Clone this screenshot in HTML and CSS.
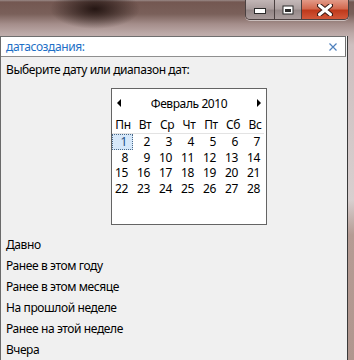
FILE: index.html
```html
<!DOCTYPE html>
<html lang="ru">
<head>
    <meta charset="UTF-8">
    <title>датасоздания</title>
    <link rel="stylesheet" href="styles.css">
</head>
<body>
    <div class="titlebar">
        <div class="caption-buttons">
            <span class="caption-btn btn-min">
                <svg width="12" height="6" viewBox="0 0 12 6"><rect x="0.5" y="0.5" width="11" height="5" fill="#fff" stroke="#2a2a2a"/></svg>
            </span>
            <span class="caption-btn btn-max">
                <svg width="12" height="10" viewBox="0 0 12 10"><rect x="0.5" y="0.5" width="11" height="9" fill="#2a2a2a"/><rect x="1.5" y="1.5" width="9" height="7" fill="#fff"/><rect x="3" y="4" width="6" height="3" fill="#2a2a2a"/></svg>
            </span>
            <span class="caption-btn btn-close">
                <svg width="16" height="12" viewBox="0 0 16 12"><path d="M2 1 L14 11 M14 1 L2 11" stroke="#3a1a14" stroke-width="5" stroke-linecap="round"/><path d="M2.5 1.5 L13.5 10.5 M13.5 1.5 L2.5 10.5" stroke="#fff" stroke-width="3" stroke-linecap="round"/></svg>
            </span>
        </div>
    </div>

    <div class="panel">
        <div class="panel-header">
            <span class="panel-title">датасоздания:</span>
            <svg class="panel-close" width="8" height="8" viewBox="0 0 8 8"><path d="M0.5 0.5 L7.5 7.5 M7.5 0.5 L0.5 7.5" stroke="#4f80bd" stroke-width="1.2"/></svg>
        </div>

        <div class="prompt">Выберите дату или диапазон дат:</div>

        <div class="calendar">
            <div class="cal-title">
                <span class="cal-arrow arrow-left"></span>
                <span>Февраль 2010</span>
                <span class="cal-arrow arrow-right"></span>
            </div>
            <div class="cal-weekdays">
                <span>Пн</span><span>Вт</span><span>Ср</span><span>Чт</span><span>Пт</span><span>Сб</span><span>Вс</span>
            </div>
            <div class="cal-days">
                <span class="day selected">1</span><span class="day">2</span><span class="day">3</span><span class="day">4</span><span class="day">5</span><span class="day">6</span><span class="day">7</span>
                <span class="day">8</span><span class="day">9</span><span class="day">10</span><span class="day">11</span><span class="day">12</span><span class="day">13</span><span class="day">14</span>
                <span class="day">15</span><span class="day">16</span><span class="day">17</span><span class="day">18</span><span class="day">19</span><span class="day">20</span><span class="day">21</span>
                <span class="day">22</span><span class="day">23</span><span class="day">24</span><span class="day">25</span><span class="day">26</span><span class="day">27</span><span class="day">28</span>
            </div>
        </div>

        <ul class="ranges">
            <li>Давно</li>
            <li>Ранее в этом году</li>
            <li>Ранее в этом месяце</li>
            <li>На прошлой неделе</li>
            <li>Ранее на этой неделе</li>
            <li>Вчера</li>
        </ul>
    </div>
</body>
</html>
```

FILE: styles.css
```css
:root {
    --color-panel: #F0F0F0;
    --color-white: #FFFFFF;
    --color-text: #000000;
    --color-link: #1E6FC6;
    --color-border: #646464;
}

body {
    margin: 0;
    width: 354px;
    height: 360px;
    overflow: hidden;
    font-family: "Segoe UI", "Noto Sans", sans-serif;
    font-size: 12px;
    letter-spacing: -0.4px;
    color: var(--color-text);
    background:
        radial-gradient(ellipse 45px 20px at 95px 9px, rgba(32, 18, 15, 0.95), rgba(32, 18, 15, 0)),
        linear-gradient(to bottom, #9a8a88 0, #735751 2px, #7a605a 14px, #a48d8a 24px, #bba8a6 33px, #cdbfbf 45px, #d8cfcf 200px, #b59c94 235px, #b0968e 360px);
}

/* Кнопки окна */
.titlebar {
    height: 36px;
    display: flex;
    justify-content: flex-end;
    align-items: flex-start;
    padding-right: 5px;
}

.caption-buttons {
    display: flex;
    height: 19px;
    border: 1px solid #4a4040;
    border-top: none;
    border-radius: 0 0 5px 5px;
    overflow: hidden;
    box-shadow: 0 1px 0 rgba(255, 255, 255, 0.5);
}

.caption-btn {
    display: flex;
    justify-content: center;
    align-items: center;
    height: 19px;
    box-sizing: border-box;
}

.btn-min {
    width: 29px;
    align-items: flex-end;
    padding-bottom: 5px;
    background: linear-gradient(to bottom, #c2b6b6 0, #aa9d9d 45%, #928585 55%, #a89b9b 100%);
    border-right: 1px solid #4a4040;
}

.btn-max {
    width: 27px;
    background: linear-gradient(to bottom, #c4b9b9 0, #ada1a1 45%, #968a8a 55%, #aa9e9e 100%);
    border-right: 1px solid #4a4040;
}

.btn-close {
    width: 46px;
    background: linear-gradient(to bottom, #e29a88 0, #d36a50 45%, #bf3a1c 55%, #d2583a 100%);
}

/* Панель */
.panel {
    width: 348px;
    height: 324px;
    box-sizing: border-box;
    background-color: var(--color-panel);
    border-left: 1px solid #6a6a6a;
    border-right: 1px solid #3a3a3a;
}

.panel-header {
    height: 21px;
    box-sizing: border-box;
    display: flex;
    justify-content: space-between;
    align-items: center;
    padding: 0 8px 0 5px;
    background-color: var(--color-white);
    border-top: 1px solid #6e6e6e;
    border-bottom: 1px solid #8f8f8f;
    margin-right: 1px;
    border-right: 1px solid #6e6e6e;
}

.panel-title {
    color: var(--color-link);
    line-height: 16px;
}

.prompt {
    margin: 5px 0 0 5px;
    line-height: 16px;
}

/* Календарь */
.calendar {
    width: 156px;
    height: 137px;
    box-sizing: border-box;
    margin: 10px 0 0 110px;
    border: 1px solid var(--color-border);
    background-color: var(--color-white);
}

.cal-title {
    height: 28px;
    display: flex;
    justify-content: space-between;
    align-items: center;
    padding: 0 5px;
}

.cal-arrow {
    width: 0;
    height: 0;
    border-top: 4px solid transparent;
    border-bottom: 4px solid transparent;
}

.arrow-left {
    border-right: 4px solid #000;
}

.arrow-right {
    border-left: 4px solid #000;
}

.cal-weekdays {
    display: grid;
    grid-template-columns: repeat(7, 22px);
    height: 16px;
    line-height: 16px;
    text-align: center;
    margin-right: 2px;
    border-bottom: 1px solid #e3e3e3;
}

.cal-days {
    display: grid;
    grid-template-columns: repeat(7, 22px);
    grid-auto-rows: 15.5px;
}

.day {
    text-align: right;
    padding-right: 6px;
    line-height: 15px;
}

.day.selected {
    box-sizing: border-box;
    width: 21px;
    padding-right: 5px;
    background-color: #d6e8fa;
    border: 1px dotted #4a6a8a;
    line-height: 13px;
    color: #1b4e86;
}

/* Диапазоны */
.ranges {
    list-style: none;
    margin: 9px 0 0 0;
    padding: 0 0 0 5px;
}

.ranges li {
    line-height: 21px;
}
```
